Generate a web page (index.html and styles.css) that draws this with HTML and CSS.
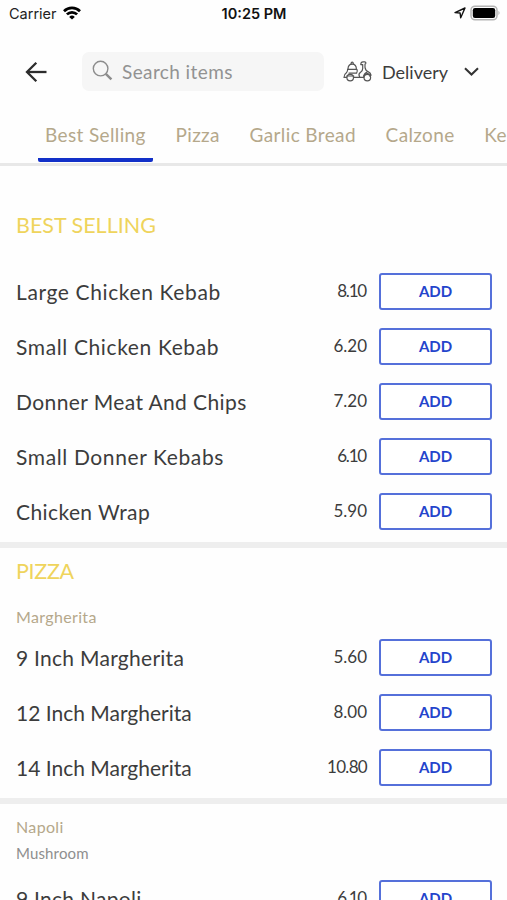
FILE: index.html
```html
<!DOCTYPE html>
<html lang="en">

<head>
    <meta charset="utf-8">
    <meta name="viewport" content="width=device-width, initial-scale=1.0">
    <title>Menu</title>
    <link rel="stylesheet" href="styles.css">
</head>

<body>

    <div class="statusbar">
        <div class="carrier">
            <span>Carrier</span>
            <svg width="18" height="14" viewBox="0 0 18 14" fill="none" stroke="#000" stroke-width="2.7">
                <path d="M1 5.2a11.4 11.4 0 0 1 16 0" />
                <path d="M3.9 8.4a7.2 7.2 0 0 1 10.2 0" />
                <path d="M9 13.6L6.2 10.9a4 4 0 0 1 5.6 0z" fill="#000" stroke="none" />
            </svg>
        </div>
        <span class="clock">10:25 PM</span>
        <div class="battery">
            <svg width="12" height="12" viewBox="0 0 12 12" fill="none" stroke="#111" stroke-width="1.4" stroke-linejoin="round">
                <path d="M1 5.6L11 1L6.7 10.8L6.1 6z" />
            </svg>
            <svg width="31" height="16" viewBox="0 0 31 16">
                <rect x="1" y="1.2" width="26" height="13.6" rx="4" fill="#fff" stroke="#b4b4b4" stroke-width="1.5" />
                <rect x="2.8" y="3" width="22.4" height="10" rx="2.2" fill="#000" />
                <path d="M28.5 5.8q2 2.2 0 4.4z" fill="#aaa" />
            </svg>
        </div>
    </div>

    <div class="topbar">
        <svg class="back" width="22" height="22" viewBox="0 0 22 22" fill="none" stroke="#2c2c2c" stroke-width="2.3">
            <path d="M21.5 11H2.5" />
            <path d="M11.3 1.7L2 11l9.3 9.3" />
        </svg>
        <div class="search">
            <svg width="22" height="22" viewBox="0 0 22 22" fill="none" stroke="#8c8c8c" stroke-width="1.4">
                <circle cx="8.6" cy="8.6" r="7.3" />
                <path d="M13.8 13.8L19.4 19.4" stroke-width="2.4" />
            </svg>
            <span>Search items</span>
        </div>
        <div class="delivery">
            <svg width="29" height="21" viewBox="0 0 29 21" fill="none" stroke="#555" stroke-width="1.2" stroke-linejoin="round" stroke-linecap="round">
                <path d="M5 8.4C5 5 6.8 3.2 9.2 3.2S13.4 5 13.4 8.4" />
                <path d="M8.1 3q0-1.8 1.1-1.8T10.3 3" />
                <path d="M4.6 8.4h9.4q.8 2-.4 3.8H6" />
                <path d="M4.6 8.4q.2 2-1.2 3.4Q.9 13.4 1 16.4h2.6M10.9 16.4h9.8c0-2.6 1-4.2 3.2-5" />
                <path d="M3.8 15h7" />
                <circle cx="7.2" cy="16.6" r="3.3" />
                <path d="M18 3.6c-.4-1.8.4-2.8 2-2.8h1.8c1.3 0 1.5 2 .2 2.3v3.2c.4 2.6 1.6 4 3.4 4.6 1.4.5 2.4 1.6 2.5 3.2" />
                <path d="M18 3.6h1.7v4c0 2.8-1.4 3.2-2.7 4.2-1.2 1-1.2 2.8-.2 4.4" />
                <path d="M21 14.6c1.6-2.4 4.6-2.6 6.9-.5l-1 1" />
                <circle cx="24.3" cy="16.6" r="3.3" />
            </svg>
            <span>Delivery</span>
            <svg class="chevron" width="15" height="9" viewBox="0 0 15 9" fill="none" stroke="#333" stroke-width="2">
                <path d="M1 1.2l6.5 6.3L14 1.2" />
            </svg>
        </div>
    </div>

    <div class="tabs">
        <div class="tab valgt"><span>Best Selling</span></div>
        <div class="tab"><span>Pizza</span></div>
        <div class="tab"><span>Garlic Bread</span></div>
        <div class="tab"><span>Calzone</span></div>
        <div class="tab"><span>Ke</span></div>
    </div>

    <div class="section first">
        <h2>BEST SELLING</h2>
        <div class="item"><span class="name wide">Large Chicken Kebab</span><span class="price narrow">8.10</span><button>ADD</button></div>
        <div class="item"><span class="name wide">Small Chicken Kebab</span><span class="price">6.20</span><button>ADD</button></div>
        <div class="item"><span class="name">Donner Meat And Chips</span><span class="price">7.20</span><button>ADD</button></div>
        <div class="item"><span class="name wide">Small Donner Kebabs</span><span class="price narrow">6.10</span><button>ADD</button></div>
        <div class="item"><span class="name">Chicken Wrap</span><span class="price">5.90</span><button>ADD</button></div>
    </div>

    <div class="section">
        <h2 class="tight">PIZZA</h2>
        <h3>Margherita</h3>
        <div class="item"><span class="name inch">9 Inch Margherita</span><span class="price">5.60</span><button>ADD</button></div>
        <div class="item"><span class="name inches">12 Inch Margherita</span><span class="price">8.00</span><button>ADD</button></div>
        <div class="item"><span class="name inches">14 Inch Margherita</span><span class="price long">10.80</span><button>ADD</button></div>
    </div>

    <div class="section last">
        <h3>Napoli</h3>
        <p>Mushroom</p>
        <div class="item"><span class="name inch">9 Inch Napoli</span><span class="price narrow">6.10</span><button>ADD</button></div>
    </div>

</body>

</html>
```
FILE: styles.css
```css
* {
    box-sizing: border-box;
}

body {
    margin: 0;
    height: 900px;
    overflow: hidden;
    background-color: #fefefe;
    font-family: Lato, sans-serif;
    color: #3c3c3c;
}

h2,
h3,
p {
    margin: 0;
    font-weight: 400;
}

svg {
    display: block;
    flex: none;
}

.statusbar {
    display: grid;
    grid-template-columns: 1fr auto 1fr;
    align-items: center;
    height: 27px;
    padding: 0 6px 0 9px;
    font-family: Inter, sans-serif;
    font-size: 14.5px;
    color: #222;
}

.carrier {
    display: flex;
    align-items: center;
    gap: 6px;
}

.carrier svg {
    margin-bottom: 2px;
}

.clock {
    margin-right: 2px;
    font-weight: 600;
    color: #111;
}

.battery {
    display: flex;
    align-items: center;
    justify-content: flex-end;
    gap: 4px;
    padding-bottom: 1px;
}

.topbar {
    display: flex;
    align-items: center;
    height: 90px;
    padding: 0 28px 1px 25px;
}

.search {
    display: flex;
    align-items: center;
    gap: 8px;
    width: 242px;
    height: 39px;
    margin-left: 35px;
    padding: 0 0 1px 10px;
    border-radius: 7px;
    background-color: #f6f6f6;
    color: #929292;
    font-size: 19px;
    letter-spacing: 0.4px;
}

.delivery {
    display: flex;
    flex: 1;
    align-items: center;
    margin-left: 19px;
    font-size: 18px;
}

.delivery span {
    margin-left: 10px;
}

.chevron {
    margin-left: auto;
}

.tabs {
    display: flex;
    height: 49px;
    padding-left: 38px;
    border-bottom: 3px solid #e8e8e8;
    white-space: nowrap;
    color: #b5a88b;
    font-size: 19px;
    line-height: 36px;
    letter-spacing: 0.37px;
}

.tab {
    flex: none;
    height: 46px;
    padding: 0 7px;
    margin-right: 15.7px;
}

.valgt {
    height: 45px;
    border-bottom: 4px solid #1230c8;
    border-radius: 2px;
}

.section {
    border-bottom: 6px solid #eeeeee;
    padding: 0 15px 3px 16px;
}

.section h2 {
    height: 46px;
    font-size: 21.5px;
    line-height: 46px;
    color: #efd45c;
}

.section .tight {
    letter-spacing: -0.3px;
}

.first h2 {
    height: 98px;
    line-height: 118px;
}

.section h3 {
    height: 36px;
    font-size: 16px;
    line-height: 46px;
    letter-spacing: 0.35px;
    color: #b5a88b;
}

.last h3 {
    height: 32px;
}

.section p {
    font-size: 15px;
    line-height: 34px;
    height: 35px;
    letter-spacing: 0.15px;
    color: #8e8e8e;
}

.item {
    display: flex;
    align-items: center;
    height: 55px;
}

.name {
    flex: 1;
    font-size: 21px;
    letter-spacing: 0.4px;
}

.wide {
    letter-spacing: 0.62px;
}

.inch {
    letter-spacing: 0.27px;
}

.inches {
    letter-spacing: 0;
}

.price {
    font-size: 17px;
    margin-right: 12px;
    padding-bottom: 2px;
}

.narrow {
    letter-spacing: -1.2px;
    margin-right: 13px;
}

.long {
    letter-spacing: -0.7px;
}

.item button {
    width: 113px;
    height: 37px;
    padding: 0 0 2px;
    border: 2px solid #5570da;
    border-radius: 3px;
    background-color: #fff;
    color: #2444cc;
    font-family: Lato, sans-serif;
    font-size: 15px;
    font-weight: 700;
}
```
